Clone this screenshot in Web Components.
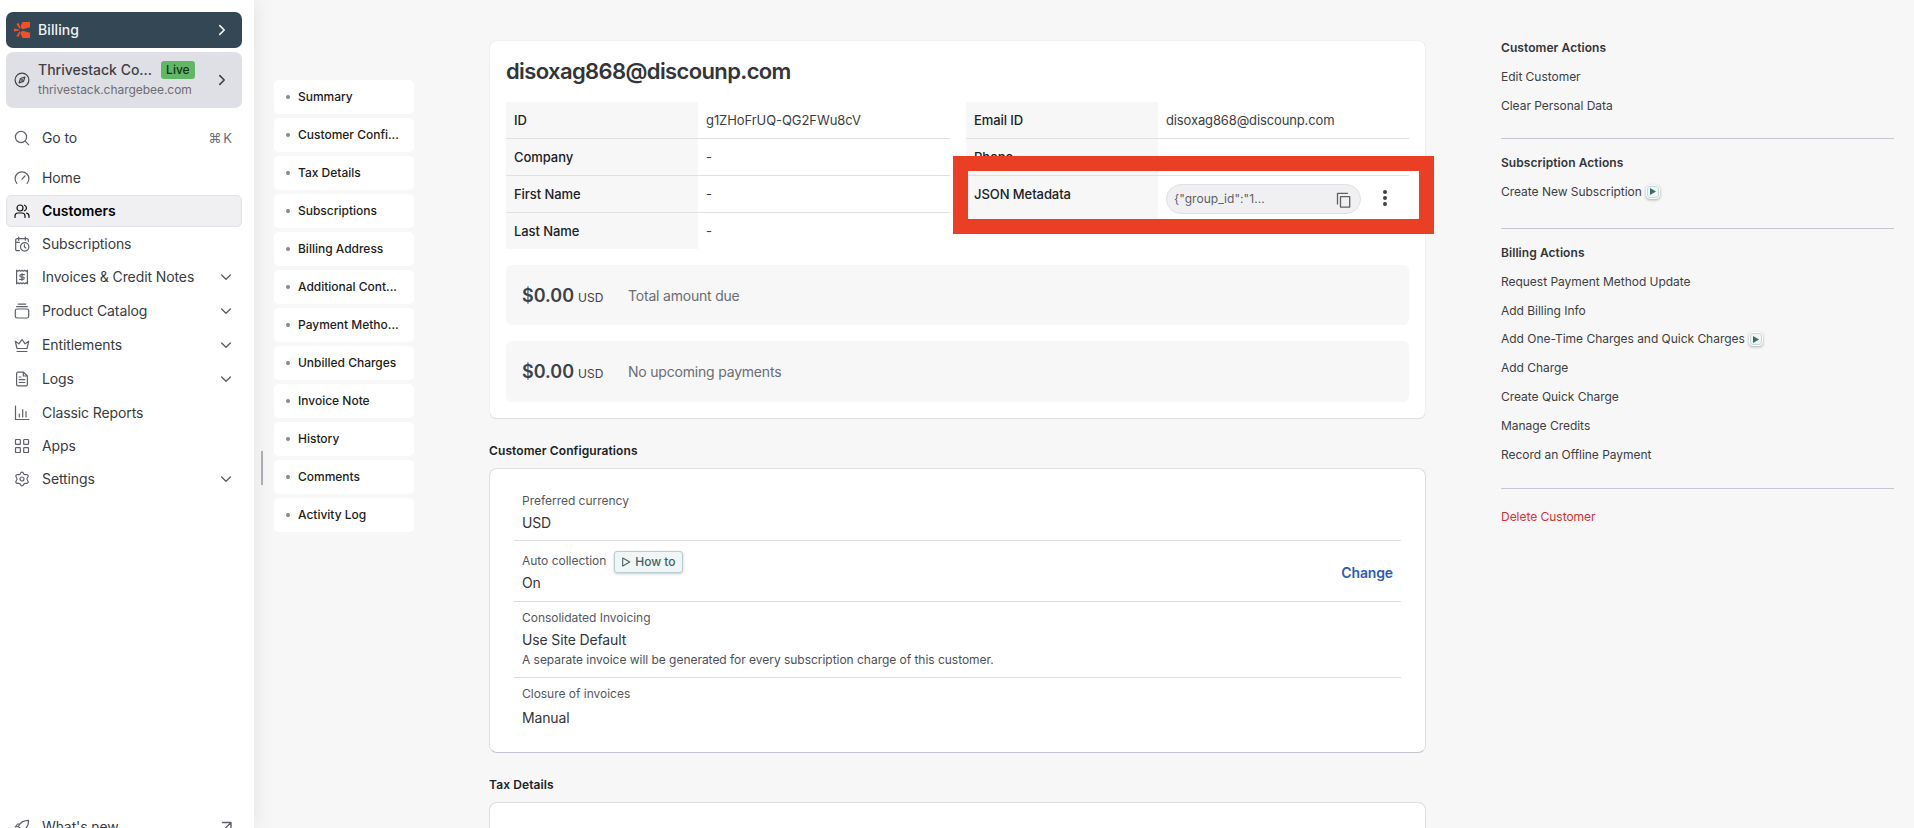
<!DOCTYPE html>
<html lang="en">
<head>
<meta charset="utf-8">
<title>disoxag868@discounp.com</title>
<style>
    html, body {
        margin: 0;
        height: 828px;
        overflow: hidden;
        background: #f7f7f7;
        font-family: Inter, "Liberation Sans", sans-serif;
        font-size: 12px;
        line-height: 20px;
        color: #333539;
    }
</style>
</head>
<body>
<customer-page></customer-page>

<script>
/** Icons, drawn on a 16px grid */
const ICONS = {
    search: '<circle cx="7" cy="7" r="5.6"/><path d="M11.2 11.2 14.8 14.8"/>',
    gauge: '<path d="M2.9 13.4A6.9 6.9 0 1 1 13.1 13.4"/><path d="M8 9.2 11 6"/>',
    users: '<circle cx="6" cy="5" r="3"/><path d="M1 14.4V13a3 3 0 0 1 3-3h4a3 3 0 0 1 3 3v1.400"/><path d="M10.500 2.200a3 3 0 0 1 0 5.600M12.600 10.200a3 3 0 0 1 2.400 2.900v1.300"/>',
    calendar: '<path d="M14.300 5.600V4a1.300 1.300 0 0 0-1.300-1.300H3A1.300 1.300 0 0 0 1.700 4v9.300A1.300 1.300 0 0 0 3 14.700h2.400M4.700 1v3.200M11.300 1v3.200M1.700 6.300h3.600"/><circle cx="10.700" cy="10.900" r="4.200"/><path d="M10.400 8.700v2.400l1.500.9"/>',
    receipt: '<path d="M2.600 1.200v13.600l1.350-1 1.350 1 1.350-1L8 14.800l1.350-1 1.350 1 1.350-1 1.350 1V1.200l-1.350 1-1.350-1-1.350 1L8 1.200l-1.350 1-1.350-1-1.350 1z"/><path d="M10.300 5.700H7a1.100 1.100 0 0 0 0 2.300h2a1.100 1.100 0 0 1 0 2.300H5.600M8 4.500v7"/>',
    stack: '<rect x="1.300" y="6" width="13.400" height="9" rx="1.800"/><path d="M2.600 3.600h10.800M4.200 1.100h7.600"/>',
    crown: '<path d="M1.300 4.300 3 11.500h10l1.700-7.200-3.600 2.500L8 2.500 4.900 6.800z"/><path d="M3 14.500h10"/>',
    file: '<path d="M9.500 1.200H3.900a1.300 1.300 0 0 0-1.300 1.300v11a1.300 1.300 0 0 0 1.300 1.300h8.200a1.300 1.300 0 0 0 1.300-1.300V5z"/><path d="M9.300 1.400V5h3.900M5.200 6h1.600M5.200 8.700h5.600M5.200 11.500h5.600"/>',
    chart: '<path d="M1.500 1v13.500h13.300M5.300 12V9M8.700 12V4.600M12 12V6.600"/>',
    grid: '<rect x="1.500" y="1.500" width="4.800" height="4.800" rx=".6"/><rect x="9.700" y="1.500" width="4.800" height="4.800" rx=".6"/><rect x="1.500" y="9.700" width="4.800" height="4.800" rx=".6"/><rect x="9.700" y="9.700" width="4.800" height="4.800" rx=".6"/>',
    gear: '<path d="M8 1.100c1 0 1.300.5 1.700 1.700.4.900 1 1.100 1.900.8 1.300-.3 1.900-.1 2.400.8s.3 1.400-.6 2.400c-.6.700-.6 1.500 0 2.300.9 1 1.100 1.600.6 2.500s-1.100 1-2.400.8c-.9-.2-1.500.1-1.900.9C9.300 14.500 9 14.900 8 14.900s-1.300-.4-1.700-1.600c-.4-.8-1-1.100-1.900-.9-1.300.2-1.900.1-2.400-.8s-.3-1.500.6-2.500c.6-.800.6-1.600 0-2.300-.9-1-1.100-1.500-.6-2.400s1.100-1.100 2.400-.8c.9.300 1.500.1 1.900-.8C6.700 1.600 7 1.100 8 1.100z"/><circle cx="8" cy="8" r="2"/>',
    compass: '<circle cx="8" cy="8" r="6.900"/><path d="M10.900 5.100 9.500 9.400 5.100 10.900 6.500 6.500z"/><circle cx="8" cy="8" r=".4"/>',
    rocket: '<path d="M4.300 7.500C6 4 9 1.300 14.600 1.400 14.700 7 12 10 8.500 11.700zM4.300 7.500 1.200 8 3.600 5h2.400M8.500 11.700 8 14.800l3-2.400V10M3.500 10.500c-1.300 1-1.600 2.500-1.700 3.700 1.200-.1 2.700-.4 3.700-1.700"/>',
    out: '<path d="M4.500 3.500h8.500v8.500M13 3.500 3.500 13"/>',
    right: '<path d="M5.800 3.600 10.200 8 5.800 12.400"/>',
    down: '<path d="M3.600 6 8 10.300 12.400 6"/>',
    play: '<path d="M3.600 2.600 13 8 3.600 13.400z"/>',
    copy: '<path d="M4.500 4.600h9.200v10.500H4.500z"/><path d="M1.500 12V1.300h10"/>'
}

class UiIcon extends HTMLElement {
    constructor() {
        super()
        const size = parseInt(this.getAttribute('size'), 10) || 16
        const stroke = this.getAttribute('stroke') || 1.2
        this.attachShadow({ mode: 'open' }).innerHTML = `
            <style>
                :host { display: inline-flex; flex: none; }
                svg { display: block; }
            </style>
            <svg width="${size}" height="${size}" viewBox="0 0 16 16" fill="none" stroke="currentColor"
                stroke-width="${stroke}" stroke-linecap="round" stroke-linejoin="round">${ICONS[this.getAttribute('name')]}</svg>`
    }
}

/** One row of the sidebar menu */
class NavItem extends HTMLElement {
    constructor() {
        super()
        const end = this.getAttribute('end')
        this.attachShadow({ mode: 'open' }).innerHTML = `
            <style>
                :host {
                    box-sizing: border-box;
                    display: flex;
                    flex: none;
                    align-items: center;
                    height: ${end ? 33 : 32}px;
                    padding: 0 7px ${end ? 1 : 0}px 7px;
                    border: 1px solid transparent;
                    border-radius: 5px;
                    font-size: 14px;
                    letter-spacing: -.1px;
                    color: #393b40;
                }
                :host([active]) {
                    background: #f0f0f3;
                    border-color: #e2e2e9;
                    font-weight: 600;
                    letter-spacing: -.05px;
                    color: #000;
                }
                ui-icon { color: #5f6168; }
                :host([active]) ui-icon { color: #111; }
                .label { flex: 1; margin-left: 12px; white-space: nowrap; }
            </style>
            <ui-icon name="${this.getAttribute('icon')}"></ui-icon>
            <span class="label"><slot></slot></span>
            <slot name="end">${end ? `<ui-icon name="${end}" stroke="1.4"></ui-icon>` : ''}</slot>`
    }
}

class AppSidebar extends HTMLElement {
    constructor() {
        super()
        this.attachShadow({ mode: 'open' }).innerHTML = `
            <style>
                :host {
                    box-sizing: border-box;
                    display: flex;
                    flex-direction: column;
                    width: 254px;
                    height: 828px;
                    padding: 12px 12px 0 6px;
                    background: #fff;
                    box-shadow: 0 0 22px rgba(0, 0, 0, .09);
                }
                .product, .site {
                    box-sizing: border-box;
                    display: flex;
                    flex: none;
                    align-items: center;
                    border-radius: 7px;
                }
                .product {
                    height: 36px;
                    padding: 0 12px 0 8px;
                    background: #334854;
                    color: #f1f3f4;
                    font-size: 14px;
                    font-weight: 500;
                    letter-spacing: .1px;
                }
                .product span { flex: 1; margin-left: 8px; }
                .site {
                    height: 56px;
                    margin-top: 4px;
                    padding: 0 12px 0 8px;
                    background: #dfe0e5;
                }
                .site div { flex: 1; margin-left: 8px; }
                .name {
                    display: flex;
                    align-items: center;
                    height: 18px;
                    font-size: 14px;
                    font-weight: 500;
                    color: #3f4147;
                }
                .live {
                    margin-left: 9px;
                    padding: 0 5px;
                    border-radius: 3px;
                    background: #62b766;
                    color: #16301a;
                    font-size: 12px;
                    line-height: 18px;
                }
                .domain { display: block; font-size: 12px; line-height: 20px; margin-top: 1px; color: #6b6d73; letter-spacing: -.04px; }
                .site > ui-icon { color: #3f4147; }
                .goto { margin: 14px 0 8px; }
                .key { font-size: 13px; letter-spacing: 0; color: #6b6d73; word-spacing: -2px; margin-right: 2px; }
                nav { display: flex; flex: none; flex-direction: column; gap: 1px; }
                .news { margin-top: 315px; }
            </style>
            <div class="product">
                <svg width="16" height="16" viewBox="0 0 16 16" fill="#f2502a">
                    <path d="M8.500 0H16V5.200L8.600 7.300 6.200 5.300zM8.600 8.700 16 10.800V16H8.500L6.200 10.700zM2.200 1.800 5 1.200 6.300 6.200 5.500 6.700zM2.200 14.200 5 14.800 6.300 9.800 5.500 9.300zM0 6.400 5 7.500V8.500L0 9.600z"/>
                </svg>
                <span>Billing</span>
                <ui-icon name="right" stroke="1.700"></ui-icon>
            </div>
            <div class="site">
                <ui-icon name="compass"></ui-icon>
                <div>
                    <span class="name">Thrivestack Co...<span class="live">Live</span></span>
                    <span class="domain">thrivestack.chargebee.com</span>
                </div>
                <ui-icon name="right" stroke="1.600"></ui-icon>
            </div>
            <nav-item class="goto" icon="search">Go to<span class="key" slot="end">⌘ K</span></nav-item>
            <nav>
                <nav-item icon="gauge">Home</nav-item>
                <nav-item icon="users" active>Customers</nav-item>
                <nav-item icon="calendar">Subscriptions</nav-item>
                <nav-item icon="receipt" end="down">Invoices &amp; Credit Notes</nav-item>
                <nav-item icon="stack" end="down">Product Catalog</nav-item>
                <nav-item icon="crown" end="down">Entitlements</nav-item>
                <nav-item icon="file" end="down">Logs</nav-item>
                <nav-item icon="chart">Classic Reports</nav-item>
                <nav-item icon="grid">Apps</nav-item>
                <nav-item icon="gear" end="down">Settings</nav-item>
            </nav>
            <nav-item class="news" icon="rocket" end="out">What's new</nav-item>`
    }
}

/** Links to the sections of the page */
class SectionLinks extends HTMLElement {
    constructor() {
        super()
        this.attachShadow({ mode: 'open' }).innerHTML = `
            <style>
                :host { display: flex; flex-direction: column; gap: 4px; width: 140px; }
                a {
                    display: flex;
                    align-items: center;
                    height: 34px;
                    padding-left: 12px;
                    border-radius: 5px;
                    background: #fff;
                    color: #1c1d20;
                    font-weight: 500;
                    letter-spacing: -.01px;
                }
                a::before {
                    content: '';
                    width: 4px;
                    height: 4px;
                    margin-right: 8px;
                    border-radius: 2px;
                    background: #85878d;
                }
            </style>
            ${this.getAttribute('items').split('|').map(i => `<a>${i}</a>`).join('')}`
    }
}

class DetailRow extends HTMLElement {
    constructor() {
        super()
        this.attachShadow({ mode: 'open' }).innerHTML = `
            <style>
                :host {
                    box-sizing: border-box;
                    display: flex;
                    height: 37px;
                    border-bottom: 1px solid #e0e0e3;
                    font-size: 13px;
                    line-height: 37px;
                    letter-spacing: -.07px;
                }
                :host(:last-child) { border-bottom: 0; height: 36px; }
                .label {
                    box-sizing: border-box;
                    width: 192px;
                    padding-left: 8px;
                    background: #f7f7f7;
                    color: #202226;
                    font-weight: 500;
                }
                .value { display: flex; flex: 1; padding-left: 8px; color: #3c3e43; }
            </style>
            <div class="label">${this.getAttribute('label')}</div>
            <div class="value"><slot></slot></div>`
    }
}

/** Clipped JSON value with its copy button and menu */
class JsonValue extends HTMLElement {
    constructor() {
        super()
        this.attachShadow({ mode: 'open' }).innerHTML = `
            <style>
                :host { display: flex; align-items: center; height: 30px; margin-top: 8px; }
                .pill {
                    box-sizing: border-box;
                    display: flex;
                    align-items: center;
                    justify-content: space-between;
                    width: 195px;
                    height: 30px;
                    padding: 0 8px 0 7px;
                    border: 1px solid #e0e0e5;
                    border-radius: 15px;
                    background: #f0f0f3;
                    font-size: 12px;
                    line-height: 18px;
                    letter-spacing: .05px;
                    color: #5d5f65;
                }
                .menu { margin: 0 0 2px 22px; color: #3f4147; }
                ui-icon { margin-top: 2px; }
                svg { display: block; }
            </style>
            <div class="pill"><slot></slot><ui-icon name="copy" size="16" stroke="1.300"></ui-icon></div>
            <svg class="menu" width="4" height="16" viewBox="0 0 4 16" fill="currentColor">
                <circle cx="2" cy="2" r="2"/><circle cx="2" cy="8" r="2"/><circle cx="2" cy="14" r="2"/>
            </svg>`
    }
}

class AmountBox extends HTMLElement {
    constructor() {
        super()
        this.attachShadow({ mode: 'open' }).innerHTML = `
            <style>
                :host {
                    box-sizing: border-box;
                    display: flex;
                    align-items: center;
                    height: 60px;
                    padding: 2px 0 0 16px;
                    border-radius: 6px;
                    background: #f7f7f7;
                    font-size: 14px;
                    letter-spacing: -.2px;
                    color: #6b6d73;
                }
                .sum { width: 106px; margin-top: 2px; line-height: 24px; letter-spacing: 0; color: #3f4147; }
                b { font-size: 18px; font-weight: 600; }
                small { font-size: 12px; }
            </style>
            <div class="sum"><b>$0.00</b> <small>USD</small></div>
            <slot></slot>`
    }
}

class SummaryCard extends HTMLElement {
    constructor() {
        super()
        this.attachShadow({ mode: 'open' }).innerHTML = `
            <style>
                :host {
                    box-sizing: border-box;
                    display: block;
                    position: relative;
                    width: 935px;
                    height: 377px;
                    margin-left: 1px;
                    padding: 16px 16px 0;
                    border-radius: 6px;
                    background: #fff;
                    box-shadow: 0 0 1px rgba(0, 0, 0, .2), 0 1px 1px rgba(0, 0, 0, .08);
                }
                h1 { margin: 0 0 17px; font-size: 22px; font-weight: 600; line-height: 28px; letter-spacing: -.62px; color: #333539; }
                .details { display: grid; grid-template-columns: 444px 443px; gap: 16px; height: 147px; }
                .amounts { display: flex; flex-direction: column; gap: 16px; margin-top: 16px; }
                .amounts :last-child { height: 61px; padding-top: 1px; }
                .mark {
                    position: absolute;
                    box-sizing: border-box;
                    left: 463px;
                    top: 115px;
                    width: 481px;
                    height: 78px;
                    border: 15px solid #ea3f25;
                }
            </style>
            <h1>disoxag868@discounp.com</h1>
            <div class="details">
                <div>
                    <detail-row label="ID">g1ZHoFrUQ-QG2FWu8cV</detail-row>
                    <detail-row label="Company">-</detail-row>
                    <detail-row label="First Name">-</detail-row>
                    <detail-row label="Last Name">-</detail-row>
                </div>
                <div>
                    <detail-row label="Email ID"><span style="letter-spacing: -.13px">disoxag868@discounp.com</span></detail-row>
                    <detail-row label="Phone"></detail-row>
                    <detail-row label="JSON Metadata" style="height: 45px"><json-value>{"group_id":"1...</json-value></detail-row>
                </div>
            </div>
            <div class="amounts">
                <amount-box>Total amount due</amount-box>
                <amount-box>No upcoming payments</amount-box>
            </div>
            <div class="mark"></div>`
    }
}

/** Titled card of the main column */
class PageSection extends HTMLElement {
    constructor() {
        super()
        this.attachShadow({ mode: 'open' }).innerHTML = `
            <style>
                :host { display: block; }
                h2 { margin: 0 0 7px; font-size: 12px; font-weight: 600; line-height: 20px; letter-spacing: .1px; color: #202226; }
                .card {
                    box-sizing: border-box;
                    height: var(--card-height, 285px);
                    padding: 13px 24px 0;
                    border: 1px solid #dedee1;
                    border-bottom-color: #c3c4cb;
                    border-radius: 8px;
                    background: #fff;
                }
            </style>
            <h2>${this.getAttribute('heading')}</h2>
            <div class="card"><slot></slot></div>`
    }
}

class ConfigRow extends HTMLElement {
    constructor() {
        super()
        this.attachShadow({ mode: 'open' }).innerHTML = `
            <style>
                :host {
                    box-sizing: border-box;
                    display: flex;
                    align-items: flex-start;
                    justify-content: space-between;
                    padding: 0 8px;
                    border-bottom: 1px solid #dedee1;
                }
                :host(:last-child) { border: 0; }
                .label { display: flex; align-items: center; gap: 8px; height: 20px; color: #55575d; letter-spacing: -.02px; }
                .value { margin-top: var(--value-gap, 1px); font-size: 14px; line-height: 22px; letter-spacing: -.14px; color: #333539; }
                ::slotted([slot=note]) { display: block; line-height: 18px; color: #4d4f55; letter-spacing: -.03px; }
                ::slotted([slot=action]) { margin-top: 12px; font-size: 14px; font-weight: 600; letter-spacing: -.15px; color: #2d5db0; }
            </style>
            <div>
                <div class="label">${this.getAttribute('label')}<slot name="help"></slot></div>
                <div class="value"><slot></slot></div>
                <slot name="note"></slot>
            </div>
            <slot name="action"></slot>`
    }
}

class HowTo extends HTMLElement {
    constructor() {
        super()
        this.attachShadow({ mode: 'open' }).innerHTML = `
            <style>
                :host {
                    box-sizing: border-box;
                    display: inline-flex;
                    align-items: center;
                    gap: 3px;
                    height: 22px;
                    margin-top: 2px;
                    padding: 0 6px 0 5px;
                    border: 1px solid #b3cfd2;
                    border-radius: 3px;
                    background: #eff6f5;
                    box-shadow: 0 1px 3px rgba(0, 0, 0, .22);
                    font-weight: 500;
                    color: #44625f;
                }
            </style>
            <ui-icon name="play" size="12" stroke="1.400"></ui-icon><slot></slot>`
    }
}

class PlayBadge extends HTMLElement {
    constructor() {
        super()
        this.attachShadow({ mode: 'open' }).innerHTML = `
            <style>
                :host {
                    box-sizing: border-box;
                    display: inline-flex;
                    align-items: center;
                    justify-content: center;
                    width: 14px;
                    height: 14px;
                    margin-left: 4px;
                    border: 1px solid #fff;
                    border-radius: 4px;
                    background: #eff6f5;
                    box-shadow: inset 0 0 0 1px #bfdadd, 0 1px 3px rgba(0, 0, 0, .3);
                }
            </style>
            <svg width="6" height="7" viewBox="0 0 6 7" fill="#3f6a6e"><path d="M0 0 6 3.500 0 7z"/></svg>`
    }
}

class ActionGroup extends HTMLElement {
    constructor() {
        super()
        const heading = this.getAttribute('heading')
        this.attachShadow({ mode: 'open' }).innerHTML = `
            <style>
                :host { display: block; padding: 9px 0 18px; border-bottom: 1px solid #c5c6cf; letter-spacing: -.03px; }
                :host(:first-child) { padding-top: 10px; }
                :host(:last-child) { border: 0; padding-top: 13px; }
                h3 { margin: 0; font-size: 12px; font-weight: 600; line-height: 29px; letter-spacing: .07px; color: #333539; }
                ::slotted(a) { display: flex; align-items: center; height: 29px; color: var(--action-color, #3c3e43); }
            </style>
            ${heading ? `<h3>${heading}</h3>` : ''}
            <slot></slot>`
    }
}

class CustomerPage extends HTMLElement {
    constructor() {
        super()
        this.attachShadow({ mode: 'open' }).innerHTML = `
            <style>
                :host { display: flex; height: 828px; overflow: hidden; }
                app-sidebar { flex: none; }
                .handle { width: 2px; height: 34px; margin: 451px 11px 0 7px; background: #abacb4; z-index: 1; }
                section-links { margin: 80px 75px 0 0; }
                main { width: 937px; padding-top: 41px; }
                page-section { margin-top: 23px; }
                page-section + page-section { margin-top: 22px; --card-height: 40px; }
                aside { width: 393px; margin-left: 75px; padding-top: 23px; }
            </style>
            <app-sidebar></app-sidebar>
            <div class="handle"></div>
            <section-links items="Summary|Customer Confi...|Tax Details|Subscriptions|Billing Address|Additional Cont...|Payment Metho...|Unbilled Charges|Invoice Note|History|Comments|Activity Log"></section-links>
            <main>
                <summary-card></summary-card>
                <page-section heading="Customer Configurations">
                    <config-row label="Preferred currency" style="height: 59px; padding-top: 9px">USD</config-row>
                    <config-row label="Auto collection" style="height: 61px; padding-top: 10px; --value-gap: 1px">On
                        <how-to slot="help">How to</how-to>
                        <span slot="action">Change</span>
                    </config-row>
                    <config-row label="Consolidated Invoicing" style="height: 76px; padding-top: 6px">Use Site Default
                        <span slot="note">A separate invoice will be generated for every subscription charge of this customer.</span>
                    </config-row>
                    <config-row label="Closure of invoices" style="height: 56px; padding-top: 6px; --value-gap: 3px">Manual</config-row>
                </page-section>
                <page-section heading="Tax Details"></page-section>
            </main>
            <aside>
                <action-group heading="Customer Actions">
                    <a>Edit Customer</a>
                    <a>Clear Personal Data</a>
                </action-group>
                <action-group heading="Subscription Actions" style="padding-bottom: 22px">
                    <a>Create New Subscription<play-badge></play-badge></a>
                </action-group>
                <action-group heading="Billing Actions" style="padding-bottom: 19px">
                    <a>Request Payment Method Update</a>
                    <a>Add Billing Info</a>
                    <a style="height: 28px">Add One-Time Charges and Quick Charges<play-badge></play-badge></a>
                    <a>Add Charge</a>
                    <a>Create Quick Charge</a>
                    <a>Manage Credits</a>
                    <a>Record an Offline Payment</a>
                </action-group>
                <action-group style="--action-color: #cf3434">
                    <a>Delete Customer</a>
                </action-group>
            </aside>`
    }
}

customElements.define('ui-icon', UiIcon)
customElements.define('nav-item', NavItem)
customElements.define('app-sidebar', AppSidebar)
customElements.define('section-links', SectionLinks)
customElements.define('detail-row', DetailRow)
customElements.define('json-value', JsonValue)
customElements.define('amount-box', AmountBox)
customElements.define('summary-card', SummaryCard)
customElements.define('page-section', PageSection)
customElements.define('config-row', ConfigRow)
customElements.define('how-to', HowTo)
customElements.define('play-badge', PlayBadge)
customElements.define('action-group', ActionGroup)
customElements.define('customer-page', CustomerPage)
</script>
</body>
</html>
